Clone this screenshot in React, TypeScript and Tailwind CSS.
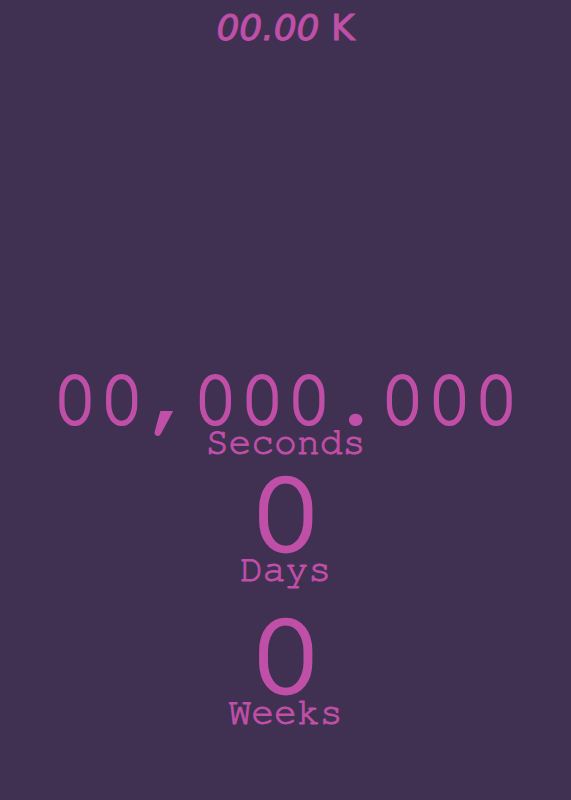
import React from "react";

export default function App() {
  const mono = { fontFamily: 'FreeMono, "Courier New", monospace' };
  return (
    <div className="w-[571px] h-[800px] bg-[#403152] text-[#c04fa8] flex flex-col items-center overflow-hidden">
      <div
        className="pt-[10px] text-[36px] leading-none [-webkit-text-stroke:1px_#c04fa8]"
        style={{ fontFamily: '"DejaVu Sans", Verdana, sans-serif' }}
      >
        <span className="italic">00.00</span>
        <span> K</span>
      </div>
      <div className="mt-[327px] flex flex-col items-center [-webkit-text-stroke:2px_#c04fa8]" style={mono}>
        <div className="text-[78px] leading-[56px] whitespace-nowrap">00,000.000</div>
        <div className="mt-[1px] text-[38px] leading-[26px] [-webkit-text-stroke:1px_#c04fa8]">Seconds</div>
        <div className="mt-[21px] text-[119px] leading-[76px] scale-x-[1.12] [-webkit-text-stroke:3px_#c04fa8]">0</div>
        <div className="mt-[4px] text-[38px] leading-[26px] [-webkit-text-stroke:1px_#c04fa8]">Days</div>
        <div className="mt-[36px] text-[119px] leading-[76px] scale-x-[1.12] [-webkit-text-stroke:3px_#c04fa8]">0</div>
        <div className="mt-[5px] text-[38px] leading-[26px] [-webkit-text-stroke:1px_#c04fa8]">Weeks</div>
      </div>
    </div>
  );
}
